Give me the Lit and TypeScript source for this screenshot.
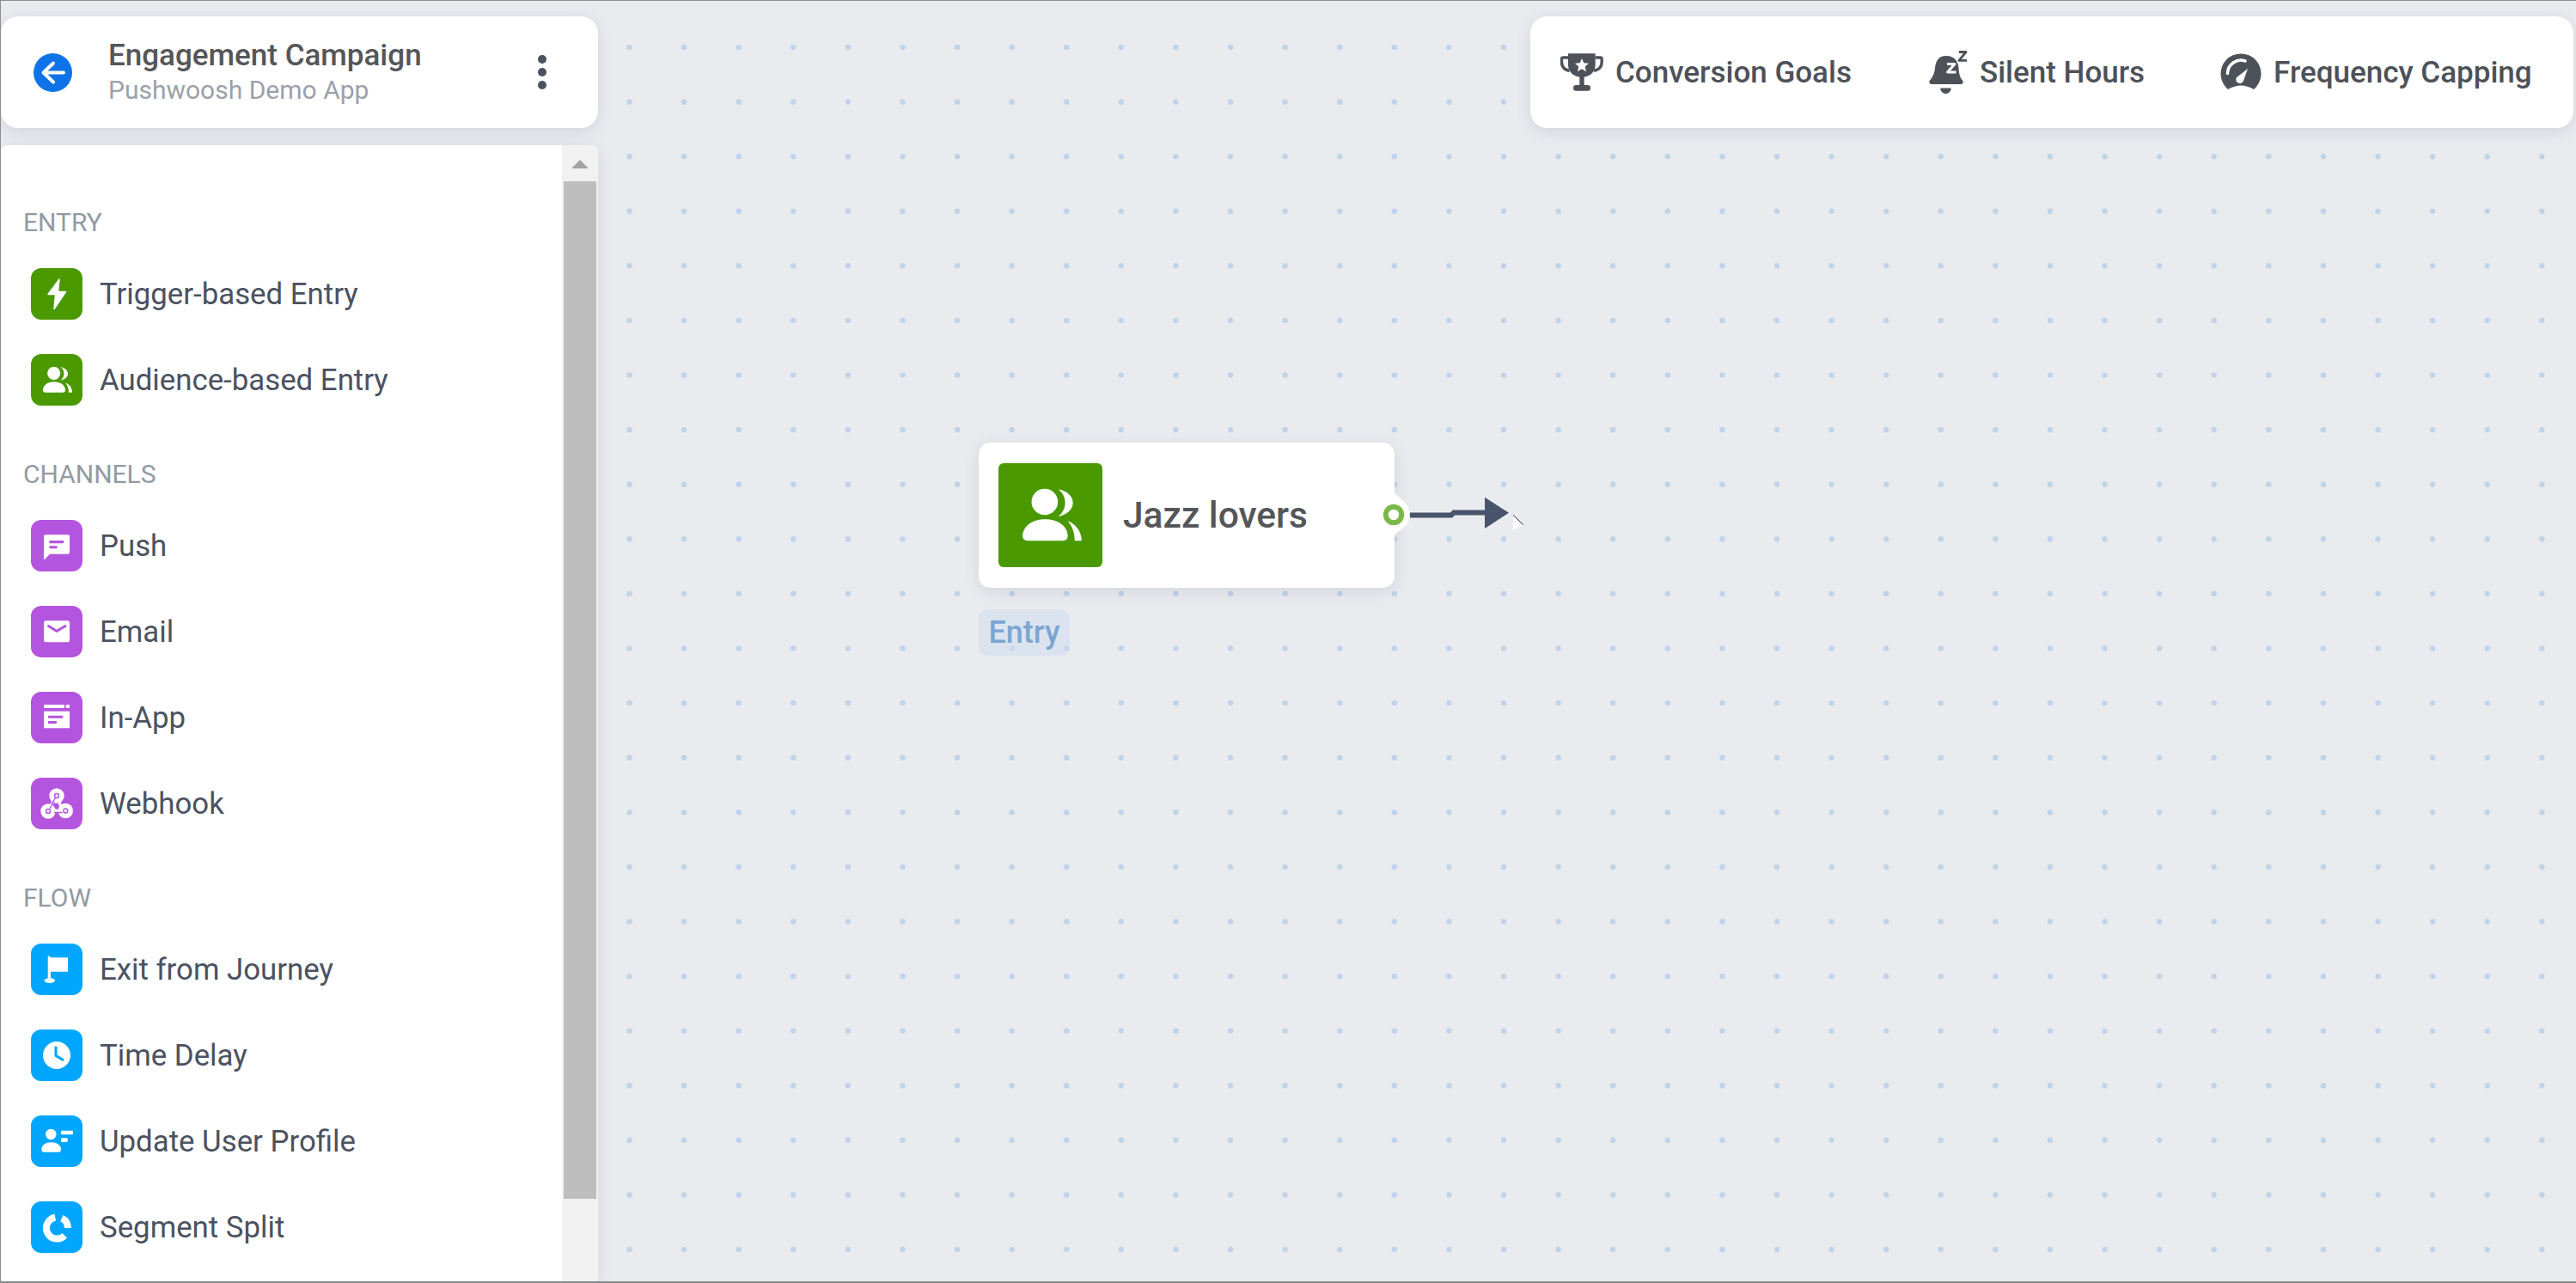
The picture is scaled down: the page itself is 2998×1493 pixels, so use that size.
import { LitElement, html, svg, css } from "lit";
import { customElement } from "lit/decorators.js";

const GREEN = "#4a9900";
const PURPLE = "#b455e0";
const BLUE = "#00a6ff";

const audience = svg`
  <circle cx="26.7" cy="22.3" r="7.6" fill="#fff" />
  <path fill="#fff" d="M14 42c0-6 6-9.7 13-9.7s13 3.7 13 9.7q0 2.7-2.7 2.7H16.7q-2.7 0-2.7-2.7z" />
  <path fill="#fff" d="M34.5 15c5 1 8.5 4 8.5 7.8s-3.5 7-8.5 8c2.5-2 4-5 4-8s-1.5-6-4-7.8z" />
  <path fill="#fff" d="M40 33.3c4 1.5 8 5.5 8 11.4h-4c0-4-1-8-4-11.4z" />
`;

const icons: Record<string, unknown> = {
  bolt: svg`<path fill="#fff" stroke="#fff" stroke-width="1.5" stroke-linejoin="round" d="M33 13 20 30.5h8.5L27 47.5 40.5 27.5h-9z" />`,
  audience,
  push: svg`
    <path fill="#fff" d="M17 17.3h26a2 2 0 0 1 2 2v18.4a2 2 0 0 1-2 2H22L16 46a.6.6 0 0 1-1-.4V19.3a2 2 0 0 1 2-2z" />
    <rect x="21.3" y="24" width="17" height="3.2" rx="1.2" fill="${PURPLE}" />
    <rect x="21.3" y="30.3" width="9.4" height="3" rx="1.2" fill="${PURPLE}" />
  `,
  email: svg`
    <rect x="15" y="17.3" width="30" height="25" rx="2.5" fill="#fff" />
    <path d="M20.5 23.5 30 29.5l10-6" fill="none" stroke="${PURPLE}" stroke-width="3" stroke-linecap="round" stroke-linejoin="round" />
  `,
  inapp: svg`
    <rect x="15" y="15" width="24" height="4" fill="#fff" />
    <rect x="40.7" y="15" width="4.3" height="4" rx="1.2" fill="#fff" />
    <rect x="15" y="22.7" width="30" height="19.6" fill="#fff" />
    <rect x="20" y="27.7" width="17.3" height="3" rx=".8" fill="${PURPLE}" />
    <rect x="20" y="34" width="10" height="3.2" rx=".8" fill="${PURPLE}" />
  `,
  webhook: svg`
    <circle cx="30" cy="21" r="8.7" fill="#fff" />
    <circle cx="20" cy="39" r="8.7" fill="#fff" />
    <circle cx="40.3" cy="38.5" r="8.7" fill="#fff" />
    <path d="M30 21 37 38.5H20L28 24" fill="none" stroke="#fff" stroke-width="3.4" />
    <path d="M28.5 23.5 24 31M36.500 40.500H27M22 36 27 27" fill="none" stroke="${PURPLE}" stroke-width="1.3" />
    <g fill="#fff" stroke="${PURPLE}" stroke-width="1.4">
      <circle cx="30" cy="21" r="2.5" />
      <circle cx="20" cy="39" r="2.5" />
      <circle cx="40.3" cy="38.5" r="2.5" />
    </g>
  `,
  flag: svg`
    <path fill="#fff" d="M19.7 15.5q0-1.4 1.6-1.2l1.7 2H43v16.4H23V40h-3.3z" />
    <ellipse cx="21.8" cy="43" rx="6.2" ry="3" fill="#fff" />
  `,
  clock: svg`
    <circle cx="30" cy="30" r="16" fill="#fff" />
    <path d="M29 20.8v9.6l8 4.8" fill="none" stroke="${BLUE}" stroke-width="3" stroke-linecap="round" stroke-linejoin="round" />
  `,
  profile: svg`
    <circle cx="23.3" cy="22" r="6.2" fill="#fff" />
    <path fill="#fff" d="M12.3 39.5c0-5 5-8.2 11.3-8.2s11.4 3.2 11.4 8.2q0 3.2-3 3.2H15.3q-3 0-3-3.2z" />
    <rect x="35" y="17.7" width="14" height="4.6" rx="1" fill="#fff" />
    <rect x="35" y="26.3" width="7.7" height="4.7" rx="1" fill="#fff" />
  `,
  segment: svg`
    <g fill="none" stroke="#fff" stroke-width="8">
      <path d="M39.3 39.8A12.5 12.5 0 1 1 28.3 18.7" />
      <path d="M35.8 19.7A12.5 12.5 0 0 1 43 31" />
    </g>
  `,
};

const sections = [
  {
    title: "ENTRY",
    color: GREEN,
    items: [
      { icon: "bolt", label: "Trigger-based Entry" },
      { icon: "audience", label: "Audience-based Entry" },
    ],
  },
  {
    title: "CHANNELS",
    color: PURPLE,
    items: [
      { icon: "push", label: "Push" },
      { icon: "email", label: "Email" },
      { icon: "inapp", label: "In-App" },
      { icon: "webhook", label: "Webhook" },
    ],
  },
  {
    title: "FLOW",
    color: BLUE,
    items: [
      { icon: "flag", label: "Exit from Journey" },
      { icon: "clock", label: "Time Delay" },
      { icon: "profile", label: "Update User Profile" },
      { icon: "segment", label: "Segment Split" },
    ],
  },
];

@customElement("app-root")
export class AppRoot extends LitElement {
  static styles = css`
    :host {
      display: flex;
      justify-content: space-between;
      align-items: flex-start;
      position: relative;
      box-sizing: border-box;
      width: 2998px;
      height: 1493px;
      padding: 18px 3px 0 0;
      border-top: 1px solid #8b8d8d;
      border-left: 1px solid #8b8d8d;
      border-bottom: 2px solid #8b8d8d;
      overflow: hidden;
      font-family: Roboto, sans-serif;
      background-color: #e9ebef;
      background-image: radial-gradient(circle, #c0d3e9 3px, transparent 3.6px);
      background-size: 63.6px 63.6px;
      background-position: 0.2px 22.2px;
    }
    .left {
      display: flex;
      flex-direction: column;
      gap: 20px;
      width: 695px;
      height: 100%;
    }
    .card {
      background: #fff;
      box-shadow: 0 4px 18px rgba(70, 80, 100, 0.14);
    }
    .head {
      display: flex;
      align-items: center;
      height: 130px;
      padding: 0 60px 0 38px;
      box-sizing: border-box;
      border-radius: 20px;
    }
    .back {
      flex: none;
      width: 45px;
      height: 45px;
      margin-right: 42px;
    }
    .titles {
      flex: 1;
    }
    .title {
      font-size: 35px;
      line-height: 40px;
      font-weight: 500;
      color: #555659;
    }
    .sub {
      margin-top: 2px;
      font-size: 30px;
      line-height: 36px;
      color: #9ba1a9;
    }
    .more {
      display: flex;
      flex-direction: column;
      gap: 5px;
    }
    .more i {
      display: block;
      width: 10px;
      height: 10px;
      border-radius: 50%;
      background: #4b5361;
    }
    .palette {
      display: flex;
      flex: 1;
      min-height: 0;
      border-radius: 8px 8px 0 0;
      overflow: hidden;
    }
    .list {
      flex: 1;
      padding: 74px 0 0 26px;
    }
    .section {
      padding-bottom: 24px;
    }
    .section h3 {
      margin: 0 0 37px;
      font-size: 30px;
      line-height: 32px;
      font-weight: 400;
      color: #929aa3;
    }
    .item {
      display: flex;
      align-items: center;
      gap: 20px;
      height: 60px;
      margin: 0 0 40px 9px;
      font-size: 34.8px;
      color: #4b5260;
    }
    .tile {
      flex: none;
      width: 60px;
      height: 60px;
      border-radius: 12px;
    }
    .tile svg {
      display: block;
    }
    .scroll {
      flex: none;
      width: 42px;
      box-sizing: border-box;
      padding: 0 2px;
      background: #f1f1f1;
    }
    .arrow {
      width: 0;
      height: 0;
      margin: 17px auto 15px;
      border-left: 10px solid transparent;
      border-right: 10px solid transparent;
      border-bottom: 10px solid #a3a3a3;
    }
    .thumb {
      height: 1184px;
      background: #bebebe;
    }
    .tools {
      display: flex;
      align-items: center;
      width: 1214px;
      height: 130px;
      box-sizing: border-box;
      padding-left: 35px;
      border-radius: 20px;
    }
    .tool {
      display: flex;
      align-items: center;
      gap: 14px;
      font-size: 35px;
      font-weight: 500;
      color: #4d5158;
    }
    .tool + .tool {
      margin-left: 90px;
    }
    .tool + .tool + .tool {
      margin-left: 88px;
    }
    .tool svg {
      display: block;
      flex: none;
    }
    .node {
      position: absolute;
      left: 1138px;
      top: 514px;
      display: flex;
      align-items: center;
      gap: 24px;
      width: 484px;
      height: 169px;
      padding-left: 23px;
      box-sizing: border-box;
      border-radius: 14px;
      font-size: 42.5px;
      font-weight: 500;
      color: #555659;
    }
    .node .tile {
      width: 121px;
      height: 121px;
      border-radius: 6px;
    }
    .tag {
      position: absolute;
      left: 1138px;
      top: 708px;
      width: 106px;
      height: 54px;
      border-radius: 10px;
      background: rgba(205, 220, 240, 0.5);
      font-size: 36px;
      font-weight: 500;
      line-height: 54px;
      text-align: center;
      color: #7ba5d3;
    }
    .wire {
      position: absolute;
      left: 1609px;
      top: 564px;
    }
  `;

  renderTile(name: string, color: string) {
    return html`<div class="tile" style="background:${color}">
      <svg width="100%" height="100%" viewBox="0 0 60 60">${icons[name]}</svg>
    </div>`;
  }

  render() {
    return html`
      <div class="left">
        <div class="head card">
          <svg class="back" viewBox="0 0 45 45">
            <circle cx="22.5" cy="22.5" r="22.5" fill="#0e73e8" />
            <path d="M23 11.5 11.5 22.5 23 33.5M12 22.5h23" fill="none" stroke="#fff" stroke-width="4" stroke-linecap="round" stroke-linejoin="round" />
          </svg>
          <div class="titles">
            <div class="title">Engagement Campaign</div>
            <div class="sub">Pushwoosh Demo App</div>
          </div>
          <div class="more"><i></i><i></i><i></i></div>
        </div>
        <div class="palette card">
          <div class="list">
            ${sections.map(
              (s) => html`<div class="section">
                <h3>${s.title}</h3>
                ${s.items.map(
                  (i) => html`<div class="item">${this.renderTile(i.icon, s.color)}<span>${i.label}</span></div>`
                )}
              </div>`
            )}
          </div>
          <div class="scroll">
            <div class="arrow"></div>
            <div class="thumb"></div>
          </div>
        </div>
      </div>

      <div class="tools card">
        <div class="tool">
          <svg width="50" height="46" viewBox="0 0 50 46">
            <path fill="#4d5158" d="M9 1.3h31.7v13c0 9-7 14.5-15.8 14.5S9 23.3 9 14.3z" />
            <path fill="none" stroke="#4d5158" stroke-width="3.4" stroke-linejoin="round" d="M9 6H3a1.5 1.5 0 0 0-1.5 1.5v4c0 5 3 8.5 9 10M40.7 6h6a1.5 1.5 0 0 1 1.5 1.5v4c0 5-3 8.5-9 10" />
            <rect x="22.3" y="28" width="5.4" height="11" fill="#4d5158" />
            <rect x="15" y="38" width="20" height="6.7" rx="3.3" fill="#4d5158" />
            <path fill="#fff" d="m25 7 2.3 5.3 5.7.5-4.3 3.8 1.3 5.6-5-3-5 3 1.3-5.6-4.3-3.8 5.7-.5z" />
          </svg>
          Conversion Goals
        </div>
        <div class="tool">
          <svg width="45" height="50" viewBox="0 0 45 50">
            <path fill="#4d5158" d="M20 6c9 0 14 6 14.5 14 .4 7 1.5 11 4.5 14.5 1.5 2 .5 4.5-2 4.5H3c-2.500 0-3.500-2.500-2-4.500 3-3.500 5.500-8 6-14.500C8 12 11 6 20 6z" />
            <path fill="#4d5158" d="M13.3 43.5h12.400c0 4-3 6.500-6.200 6.500s-6.200-2.500-6.200-6.500z" />
            <path fill="none" stroke="#fff" stroke-width="3" stroke-linejoin="round" d="M21 15.5h9l-8.500 9.500h10" />
            <path fill="none" stroke="#4d5158" stroke-width="2.8" stroke-linejoin="round" d="M35 1.5h8L35 11.3h9" />
          </svg>
          Silent Hours
        </div>
        <div class="tool">
          <svg width="48" height="44" viewBox="0 0 48 44">
            <path fill="#4d5158" d="M9 42A23.5 23.5 0 1 1 39 42Q24 33 9 42z" />
            <path fill="none" stroke="#fff" stroke-width="3.5" stroke-linecap="round" d="M8.5 23.5A15.5 15.5 0 0 1 29 9" />
            <path fill="#fff" d="M32 18 27 32a4.5 4.5 0 1 1-8-4z" />
          </svg>
          Frequency Capping
        </div>
      </div>

      <div class="node card">
        ${this.renderTile("audience", GREEN)}
        <span>Jazz lovers</span>
      </div>
      <div class="tag">Entry</div>
      <svg class="wire" width="170" height="70" viewBox="0 0 170 70">
        <path fill="#fff" d="M12 8 27 22Q30 26 30 30V38Q30 42 27 46L12 58z" />
        <circle cx="12" cy="34" r="9.2" fill="#fff" stroke="#7bb84a" stroke-width="6" />
        <path d="M31 34.5H79L82 31.5H118" fill="none" stroke="#47546b" stroke-width="6" />
        <path d="M118 13.7 146 31.7 118 50z" fill="#47546b" />
        <path d="M151 34 151 52 162.7 46z" fill="#fff" />
        <path d="M151 34.3 162.7 45.7" stroke="#222" stroke-width="1" />
      </svg>
    `;
  }
}
